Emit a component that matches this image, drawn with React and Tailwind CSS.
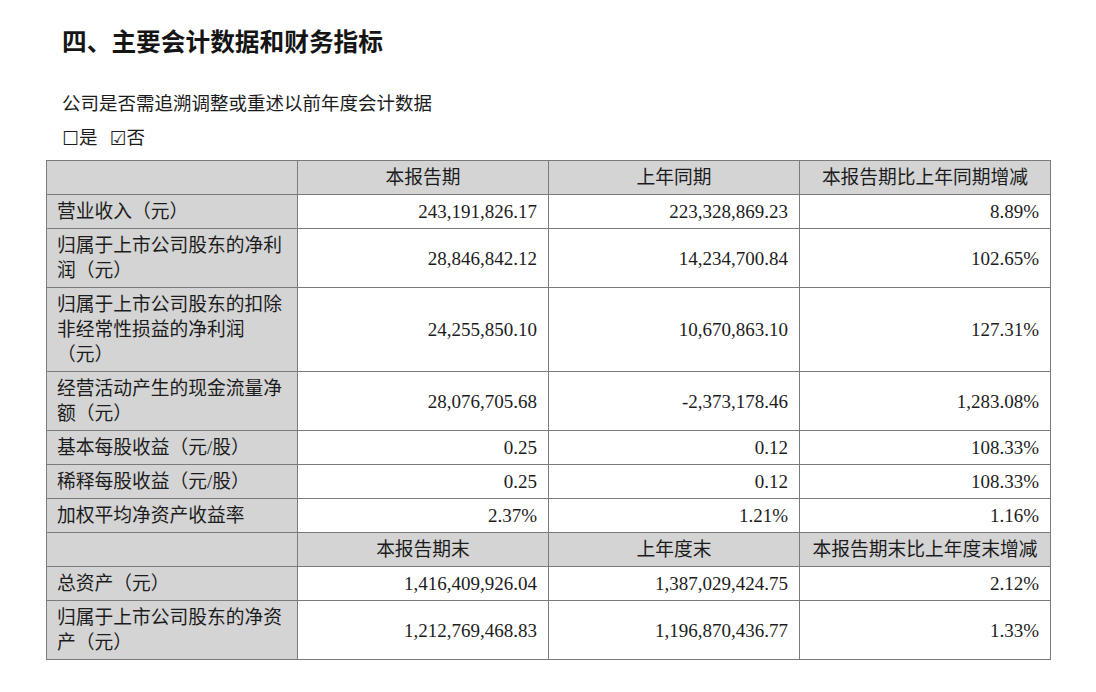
const rows = [
  { label: ['营业收入（元）'], cur: '243,191,826.17', prev: '223,328,869.23', chg: '8.89%' },
  { label: ['归属于上市公司股东的净利', '润（元）'], cur: '28,846,842.12', prev: '14,234,700.84', chg: '102.65%' },
  {
    label: ['归属于上市公司股东的扣除', '非经常性损益的净利润', '（元）'],
    cur: '24,255,850.10',
    prev: '10,670,863.10',
    chg: '127.31%',
  },
  { label: ['经营活动产生的现金流量净', '额（元）'], cur: '28,076,705.68', prev: '-2,373,178.46', chg: '1,283.08%' },
  { label: ['基本每股收益（元/股）'], cur: '0.25', prev: '0.12', chg: '108.33%' },
  { label: ['稀释每股收益（元/股）'], cur: '0.25', prev: '0.12', chg: '108.33%' },
  { label: ['加权平均净资产收益率'], cur: '2.37%', prev: '1.21%', chg: '1.16%' },
];

const rows2 = [
  { label: ['总资产（元）'], cur: '1,416,409,926.04', prev: '1,387,029,424.75', chg: '2.12%' },
  { label: ['归属于上市公司股东的净资', '产（元）'], cur: '1,212,769,468.83', prev: '1,196,870,436.77', chg: '1.33%' },
];

const cell = 'border border-[#7b7b7b] px-[10px] py-[4px] leading-[25px] align-middle';

function HeadRow({ cols }) {
  return (
    <tr className="bg-[#d4d4d4]">
      <td className={cell}></td>
      {cols.map((c) => (
        <td key={c} className={`${cell} text-center`}>
          {c}
        </td>
      ))}
    </tr>
  );
}

function DataRow({ row }) {
  return (
    <tr>
      <td className={`${cell} bg-[#d4d4d4] text-left`}>
        {row.label.map((l, i) => (
          <div key={i}>{l}</div>
        ))}
      </td>
      <td className={`${cell} text-right pr-[11px] text-[19px]`}>{row.cur}</td>
      <td className={`${cell} text-right pr-[11px] text-[19px]`}>{row.prev}</td>
      <td className={`${cell} text-right pr-[11px] text-[19px]`}>{row.chg}</td>
    </tr>
  );
}

export default function App() {
  return (
    <div
      className="min-h-screen bg-white pl-[46px] pt-[27px] text-[#1c1c1c]"
      style={{ fontFamily: '"Liberation Serif", "Noto Sans CJK SC", serif' }}
    >
      <h1 className="ml-[16px] h-[32px] text-[24.7px] font-bold leading-[32px] text-[#151515]">
        四、主要会计数据和财务指标
      </h1>
      <p className="ml-[16px] mt-[32px] h-[26px] text-[18.5px] leading-[26px]">
        公司是否需追溯调整或重述以前年度会计数据
      </p>
      <p className="ml-[16px] mt-[8px] flex h-[26px] items-center text-[18.5px] leading-[26px]">
        <span style={{ fontFamily: '"DejaVu Sans", sans-serif' }} className="text-[19px] leading-[26px]">☐</span>
        <span>是</span>
        <span
          style={{ fontFamily: '"DejaVu Sans", sans-serif' }}
          className="ml-[12px] text-[19px] leading-[26px]"
        >
          ☑
        </span>
        <span>否</span>
      </p>
      <table className="mt-[9px] w-[1004px] table-fixed border-collapse text-[18.75px]">
        <colgroup>
          <col className="w-[251px]" />
          <col className="w-[251px]" />
          <col className="w-[251px]" />
          <col className="w-[251px]" />
        </colgroup>
        <tbody>
          <HeadRow cols={['本报告期', '上年同期', '本报告期比上年同期增减']} />
          {rows.map((r) => (
            <DataRow key={r.label[0]} row={r} />
          ))}
          <HeadRow cols={['本报告期末', '上年度末', '本报告期末比上年度末增减']} />
          {rows2.map((r) => (
            <DataRow key={r.label[0]} row={r} />
          ))}
        </tbody>
      </table>
    </div>
  );
}
